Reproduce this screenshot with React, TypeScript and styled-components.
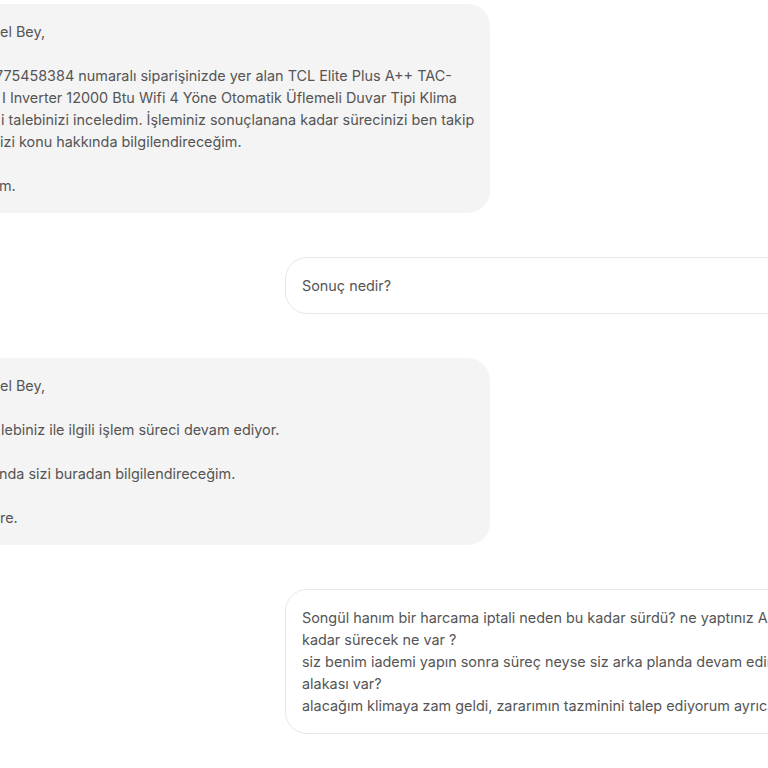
import React from 'react'
import styled, { createGlobalStyle } from 'styled-components'

const GlobalStyle = createGlobalStyle`
  html, body {
    margin: 0;
    padding: 0;
    background: #ffffff;
    overflow: hidden;
  }
  body {
    font-family: Inter, "Noto Sans", "Liberation Sans", sans-serif;
    -webkit-font-smoothing: antialiased;
  }
`

const Thread = styled.div`
  width: 768px;
  height: 768px;
  overflow: hidden;
  display: flex;
  flex-direction: column;
  align-items: flex-start;
  gap: 44px;
  padding-top: 4px;
  box-sizing: border-box;
`

const AgentBubble = styled.div`
  margin-left: -30px;
  width: 520px;
  box-sizing: border-box;
  background: #f4f4f4;
  border-radius: 22px;
  padding: 17px 24px 16px 30px;
  color: #555555;
  font-size: 14.4px;
  line-height: 22px;
`

const UserBubble = styled.div`
  margin-left: 285px;
  width: 640px;
  box-sizing: border-box;
  background: #ffffff;
  border: 1px solid #e8e8e8;
  border-radius: 22px;
  padding: 17px 16px 16px;
  color: #555555;
  font-size: 14.4px;
  line-height: 22px;
`

const Paragraph = styled.div`
  & + & {
    margin-top: 22px;
  }
`

const Line = styled.div<{ $shift?: number }>`
  white-space: nowrap;
  text-indent: ${(p) => p.$shift ?? 0}px;
`

type Para = { text: string; shift?: number }[]

const firstReply: Para[] = [
  [{ text: 'el Bey,', shift: 0 }],
  [
    { text: '775458384 numaralı siparişinizde yer alan TCL Elite Plus A++ TAC-', shift: -5 },
    { text: 'I Inverter 12000 Btu Wifi 4 Yöne Otomatik Üflemeli Duvar Tipi Klima', shift: 2 },
    { text: 'i talebinizi inceledim. İşleminiz sonuçlanana kadar sürecinizi ben takip', shift: 1 },
    { text: 'izi konu hakkında bilgilendireceğim.', shift: 0 },
  ],
  [{ text: 'm.', shift: -1 }],
]

const secondReply: Para[] = [
  [{ text: 'el Bey,', shift: 0 }],
  [{ text: 'lebiniz ile ilgili işlem süreci devam ediyor.', shift: 1 }],
  [{ text: 'nda sizi buradan bilgilendireceğim.', shift: -1 }],
  [{ text: 're.', shift: 0 }],
]

const complaint = [
  'Songül hanım bir harcama iptali neden bu kadar sürdü? ne yaptınız Allah aşkına bu',
  'kadar sürecek ne var ?',
  'siz benim iademi yapın sonra süreç neyse siz arka planda devam edin benimle ne',
  'alakası var?',
  'alacağım klimaya zam geldi, zararımın tazminini talep ediyorum ayrıca',
]

const Reply: React.FC<{ paragraphs: Para[] }> = ({ paragraphs }) => (
  <AgentBubble>
    {paragraphs.map((para, i) => (
      <Paragraph key={i}>
        {para.map((line, j) => (
          <Line key={j} $shift={line.shift}>
            {line.text}
          </Line>
        ))}
      </Paragraph>
    ))}
  </AgentBubble>
)

const App: React.FC = () => {
  return (
    <>
      <GlobalStyle />
      <Thread>
        <Reply paragraphs={firstReply} />
        <UserBubble>
          <Line>Sonuç nedir?</Line>
        </UserBubble>
        <Reply paragraphs={secondReply} />
        <UserBubble>
          {complaint.map((line, i) => (
            <Line key={i}>{line}</Line>
          ))}
        </UserBubble>
      </Thread>
    </>
  )
}

export default App
